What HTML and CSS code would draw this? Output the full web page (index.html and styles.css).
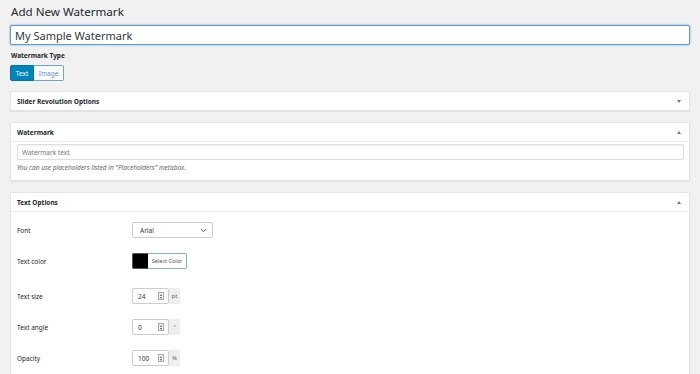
FILE: index.html
```html
<!DOCTYPE html>
<html>
<head>
<meta charset="utf-8">
<link rel="stylesheet" href="styles.css">
</head>
<body>
<div class="wrap">
  <h1 class="page-title">Add New Watermark</h1>
  <input class="title-input" type="text" value="My Sample Watermark">
  <div class="type-label">Watermark Type</div>
  <div class="btn-group">
    <span class="seg seg-active">Text</span><span class="seg">Image</span>
  </div>

  <div class="postbox closed">
    <div class="postbox-head">
      <span class="postbox-title">Slider Revolution Options</span>
      <span class="arrow arrow-down"></span>
    </div>
  </div>

  <div class="postbox">
    <div class="postbox-head">
      <span class="postbox-title">Watermark</span>
      <span class="arrow arrow-up"></span>
    </div>
    <div class="postbox-body wm-body">
      <input class="wm-input" type="text" placeholder="Watermark text">
      <p class="help">You can use placeholders listed in "Placeholders" metabox.</p>
    </div>
  </div>

  <div class="postbox">
    <div class="postbox-head">
      <span class="postbox-title">Text Options</span>
      <span class="arrow arrow-up"></span>
    </div>
    <div class="postbox-body opts">
      <div class="row">
        <span class="row-label">Font</span>
        <div class="select">
          <span>Arial</span>
          <svg class="chev" width="7" height="5" viewBox="0 0 7 5"><path d="M1 1.2 L3.5 3.6 L6 1.2" fill="none" stroke="#555" stroke-width="1"/></svg>
        </div>
      </div>
      <div class="row row-color">
        <span class="row-label">Text color</span>
        <div class="picker">
          <span class="swatch"></span><span class="pick-btn">Select Color</span>
        </div>
      </div>
      <div class="row">
        <span class="row-label">Text size</span>
        <div class="num-wrap">
          <div class="num"><span class="num-val">24</span><span class="spin"><i class="up"></i><i class="dn"></i></span></div><span class="unit">pt</span>
        </div>
      </div>
      <div class="row">
        <span class="row-label">Text angle</span>
        <div class="num-wrap">
          <div class="num"><span class="num-val">0</span><span class="spin"><i class="up"></i><i class="dn"></i></span></div><span class="unit">°</span>
        </div>
      </div>
      <div class="row">
        <span class="row-label">Opacity</span>
        <div class="num-wrap">
          <div class="num"><span class="num-val">100</span><span class="spin"><i class="up"></i><i class="dn"></i></span></div><span class="unit">%</span>
        </div>
      </div>
    </div>
  </div>
</div>
</body>
</html>
```

FILE: styles.css
```css
* { box-sizing: border-box; }
html, body { margin: 0; padding: 0; }
body {
  background: #f1f1f1;
  font-family: "Noto Sans", "Open Sans", sans-serif;
  color: #23282d;
  width: 700px;
  height: 374px;
  overflow: hidden;
}
.wrap {
  padding: 0 10px 0 10px;
}
.page-title {
  margin: 0;
  padding: 3px 0 0 1px;
  font-size: 11.6px;
  font-weight: 400;
  line-height: 17px;
  color: #23282d;
}
.title-input {
  display: block;
  width: 100%;
  height: 20px;
  margin-top: 5px;
  padding: 0 4px;
  border: 1px solid #5b9dd9;
  border-radius: 2px;
  box-shadow: 0 0 2px rgba(30, 140, 190, 0.8);
  background: #fff;
  font-family: inherit;
  font-size: 11px;
  color: #32373c;
  outline: none;
}
.type-label {
  margin-top: 6px;
  padding-left: 1px;
  font-size: 6.5px;
  font-weight: 700;
  line-height: 10px;
  color: #23282d;
}
.btn-group {
  display: flex;
  margin-top: 4px;
}
.seg {
  display: inline-flex;
  align-items: center;
  justify-content: center;
  height: 16px;
  font-size: 6.5px;
  border: 1px solid #0073aa;
  background: #f7f7f7;
  color: #0073aa;
}
.seg:first-child { width: 24px; border-radius: 2px 0 0 2px; }
.seg:last-child { width: 30px; border-radius: 0 2px 2px 0; border-left: 0; background: #fafafa; color: #5a98c6; border-color: #6aa6cf; }
.seg-active {
  background: #0085ba;
  color: #fff;
  border-color: #0073aa;
}
.postbox {
  background: #fff;
  border: 1px solid #e5e5e5;
  box-shadow: 0 1px 1px rgba(0, 0, 0, 0.06);
  margin-top: 11px;
}
.postbox.closed { margin-top: 10px; }
.postbox-head {
  display: flex;
  align-items: center;
  justify-content: space-between;
  height: 18px;
  padding: 0 8px 0 6px;
}
.postbox:not(.closed) .postbox-head {
  height: 19px;
  border-bottom: 1px solid #eee;
}
.postbox-title {
  font-size: 6.5px;
  font-weight: 700;
  color: #23282d;
}
.arrow {
  width: 0;
  height: 0;
  border-left: 2.5px solid transparent;
  border-right: 2.5px solid transparent;
}
.arrow-down { border-top: 3px solid #72777c; }
.arrow-up { border-bottom: 3px solid #72777c; }
.wm-body {
  padding: 2px 5px 7px 6px;
}
.wm-input {
  display: block;
  width: 100%;
  height: 16px;
  border: 1px solid #ddd;
  border-radius: 2px;
  box-shadow: inset 0 1px 2px rgba(0, 0, 0, 0.07);
  padding: 0 4px;
  font-family: inherit;
  font-size: 6.5px;
  color: #32373c;
  outline: none;
}
.wm-input::placeholder { color: #72777c; }
.help {
  margin: 3px 0 0 0;
  font-size: 6.5px;
  line-height: 10px;
  font-style: italic;
  color: #666;
}
.opts {
  padding: 10px 6px 6px 6px;
}
.row {
  display: flex;
  align-items: center;
  height: 16px;
  margin-bottom: 15px;
}
.row-color { margin-bottom: 19px; }
.row:last-child { margin-bottom: 6px; }
.row-label {
  width: 115px;
  font-size: 6.5px;
  color: #23282d;
}
.select {
  display: flex;
  align-items: center;
  justify-content: space-between;
  width: 81px;
  height: 16px;
  border: 1px solid #ccc;
  border-radius: 2px;
  padding: 0 5px 0 7px;
  font-size: 6.5px;
  color: #32373c;
  background: #fff;
}
.picker {
  display: flex;
  height: 16px;
}
.swatch {
  width: 16px;
  height: 16px;
  background: #000;
  border: 1px solid #555;
  border-right: 0;
  border-radius: 2px 0 0 2px;
}
.pick-btn {
  display: inline-flex;
  align-items: center;
  justify-content: center;
  width: 39px;
  height: 16px;
  border: 1px solid #7ab3d4;
  border-left: 0;
  border-radius: 0 2px 2px 0;
  background: #fdfdfd;
  font-size: 5.5px;
  color: #555;
}
.num-wrap {
  display: flex;
  height: 16px;
}
.num {
  display: flex;
  align-items: center;
  justify-content: space-between;
  width: 37px;
  height: 16px;
  border: 1px solid #ccc;
  border-radius: 2px;
  padding: 0 4px 0 5px;
  background: #fff;
  font-size: 6.5px;
  color: #32373c;
}
.spin {
  display: flex;
  flex-direction: column;
  align-items: center;
  justify-content: center;
  gap: 1px;
  width: 6px;
  height: 8px;
  border: 1px solid #aaa;
  background: #f3f3f3;
}
.spin i {
  width: 0;
  height: 0;
  border-left: 1.5px solid transparent;
  border-right: 1.5px solid transparent;
}
.spin .up { border-bottom: 2px solid #555; }
.spin .dn { border-top: 2px solid #555; }
.unit {
  display: inline-flex;
  align-items: center;
  justify-content: center;
  width: 11px;
  height: 16px;
  background: #eee;
  font-size: 6px;
  color: #666;
}
```
